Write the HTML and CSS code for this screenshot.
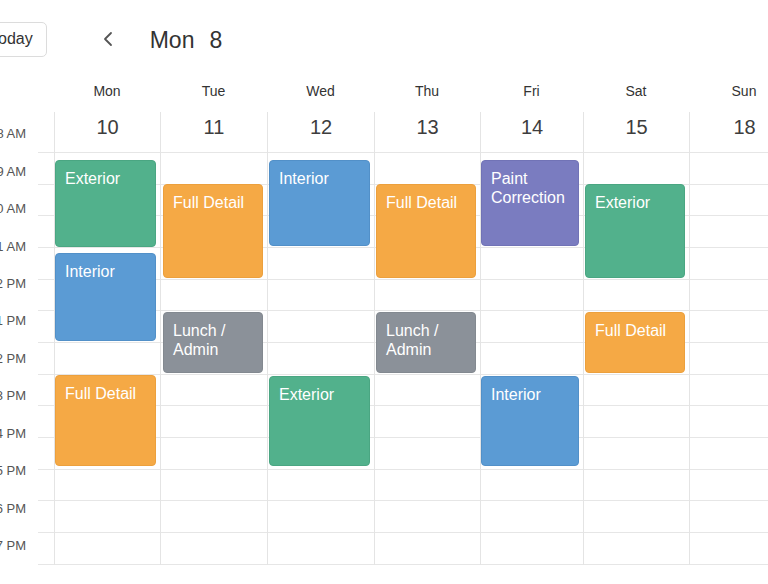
FILE: index.html
```html
<!DOCTYPE html>
<html lang="en">
<head>
<meta charset="utf-8">
<title>Week calendar</title>
<link rel="stylesheet" href="styles.css">
</head>
<body>
<div class="page">
  <header class="topbar">
    <button class="today-btn">Today</button>
    <button class="nav-btn" aria-label="Previous">
      <svg width="12" height="16" viewBox="0 0 12 16"><polyline points="9,2 3,8 9,14" fill="none" stroke="#555" stroke-width="1.8" stroke-linecap="round" stroke-linejoin="round"/></svg>
    </button>
    <h1 class="title">Mon<span class="title-day">8</span></h1>
  </header>

  <main class="calendar">
    <div class="times">
      <div class="time">8 AM</div>
      <div class="time">9 AM</div>
      <div class="time">10 AM</div>
      <div class="time">11 AM</div>
      <div class="time">12 PM</div>
      <div class="time">1 PM</div>
      <div class="time">2 PM</div>
      <div class="time">3 PM</div>
      <div class="time">4 PM</div>
      <div class="time">5 PM</div>
      <div class="time">6 PM</div>
      <div class="time">7 PM</div>
    </div>

    <div class="grid">
      <div class="lead"></div>
      <div class="dname">Mon</div>
      <div class="dname">Tue</div>
      <div class="dname">Wed</div>
      <div class="dname">Thu</div>
      <div class="dname">Fri</div>
      <div class="dname">Sat</div>
      <div class="dname">Sun</div>

      <div class="lead"></div>
      <div class="dnum">10</div>
      <div class="dnum">11</div>
      <div class="dnum">12</div>
      <div class="dnum">13</div>
      <div class="dnum">14</div>
      <div class="dnum">15</div>
      <div class="dnum">18</div>

      <div class="body lead-body"></div>
      <div class="body col flush">
        <div class="event green" style="top:8px;height:87px">Exterior</div>
        <div class="event blue" style="top:101px;height:88px">Interior</div>
        <div class="event orange" style="top:223px;height:91px">Full Detail</div>
      </div>
      <div class="body col inset">
        <div class="event orange" style="top:32px;height:94px">Full Detail</div>
        <div class="event gray" style="top:160px;height:61px">Lunch /<br>Admin</div>
      </div>
      <div class="body col">
        <div class="event blue" style="top:8px;height:86px">Interior</div>
        <div class="event green" style="top:224px;height:90px">Exterior</div>
      </div>
      <div class="body col">
        <div class="event orange" style="top:32px;height:94px">Full Detail</div>
        <div class="event gray" style="top:160px;height:61px">Lunch /<br>Admin</div>
      </div>
      <div class="body col flush">
        <div class="event purple" style="top:8px;height:86px">Paint<br>Correction</div>
        <div class="event blue" style="top:224px;height:90px">Interior</div>
      </div>
      <div class="body col">
        <div class="event green" style="top:32px;height:94px">Exterior</div>
        <div class="event orange" style="top:160px;height:61px">Full Detail</div>
      </div>
      <div class="body col"></div>
    </div>
  </main>
</div>
</body>
</html>
```

FILE: styles.css
```css
* { box-sizing: border-box; }

html, body {
  margin: 0;
  padding: 0;
  background: #ffffff;
  overflow: hidden;
}

body {
  font-family: "Liberation Sans", Arial, Helvetica, sans-serif;
  color: #333333;
  width: 768px;
  height: 584px;
}

.page {
  display: flex;
  flex-direction: column;
  width: 768px;
}

/* ---------- top bar ---------- */
.topbar {
  height: 78px;
  display: flex;
  align-items: center;
}

.today-btn {
  margin-left: -24px;
  height: 35px;
  padding: 0 13px 0 13px;
  border: 1px solid #dcdcdc;
  border-radius: 5px;
  background: #ffffff;
  font-family: inherit;
  font-size: 16px;
  color: #333333;
}

.nav-btn {
  margin-left: 54px;
  width: 14px;
  height: 18px;
  padding: 0;
  border: 0;
  background: none;
  display: flex;
  align-items: center;
  justify-content: center;
}

.title {
  margin: 2px 0 0 35px;
  font-size: 23px;
  font-weight: 400;
  color: #333333;
}

.title-day {
  margin-left: 15px;
}

/* ---------- calendar ---------- */
.calendar {
  display: flex;
}

.times {
  width: 38px;
  flex: none;
  padding-top: 37px;
  display: flex;
  flex-direction: column;
}

.time {
  height: 37.45px;
  display: flex;
  align-items: center;
  justify-content: flex-end;
  padding-right: 12px;
  font-size: 13px;
  color: #555555;
  white-space: nowrap;
}

.grid {
  flex: none;
  display: grid;
  grid-template-columns: 16px 106px 107px 107px 106px 103px 106px 110px;
  grid-template-rows: 34px 40px 413px;
}

.dname {
  padding-top: 4px;
  text-align: center;
  font-size: 14px;
  line-height: 18px;
  color: #333333;
}

.dnum {
  border-left: 1px solid #e4e4e4;
  padding-top: 4px;
  text-align: center;
  font-size: 20px;
  line-height: 22px;
  color: #3d3d3d;
}

.body {
  height: 413px;
  background-image: repeating-linear-gradient(
    to bottom,
    #e6e6e6 0,
    #e6e6e6 1px,
    transparent 1px,
    transparent 31.67px
  );
}

.col {
  position: relative;
  border-left: 1px solid #e4e4e4;
}

/* ---------- events ---------- */
.event {
  position: absolute;
  left: 1px;
  right: 4px;
  border-radius: 4px;
  padding: 8px 9px 0 9px;
  font-size: 16px;
  line-height: 19px;
  color: #ffffff;
  overflow: hidden;
}

.flush .event { left: 0; }
.inset .event { left: 2px; }

.green  { background: #52b18c; border: 1px solid #4aa682; }
.blue   { background: #5b9bd4; border: 1px solid #5290c8; }
.orange { background: #f5a945; border: 1px solid #eca03d; }
.gray   { background: #8b9199; border: 1px solid #838990; }
.purple { background: #7a7cc0; border: 1px solid #7173b6; }
```
